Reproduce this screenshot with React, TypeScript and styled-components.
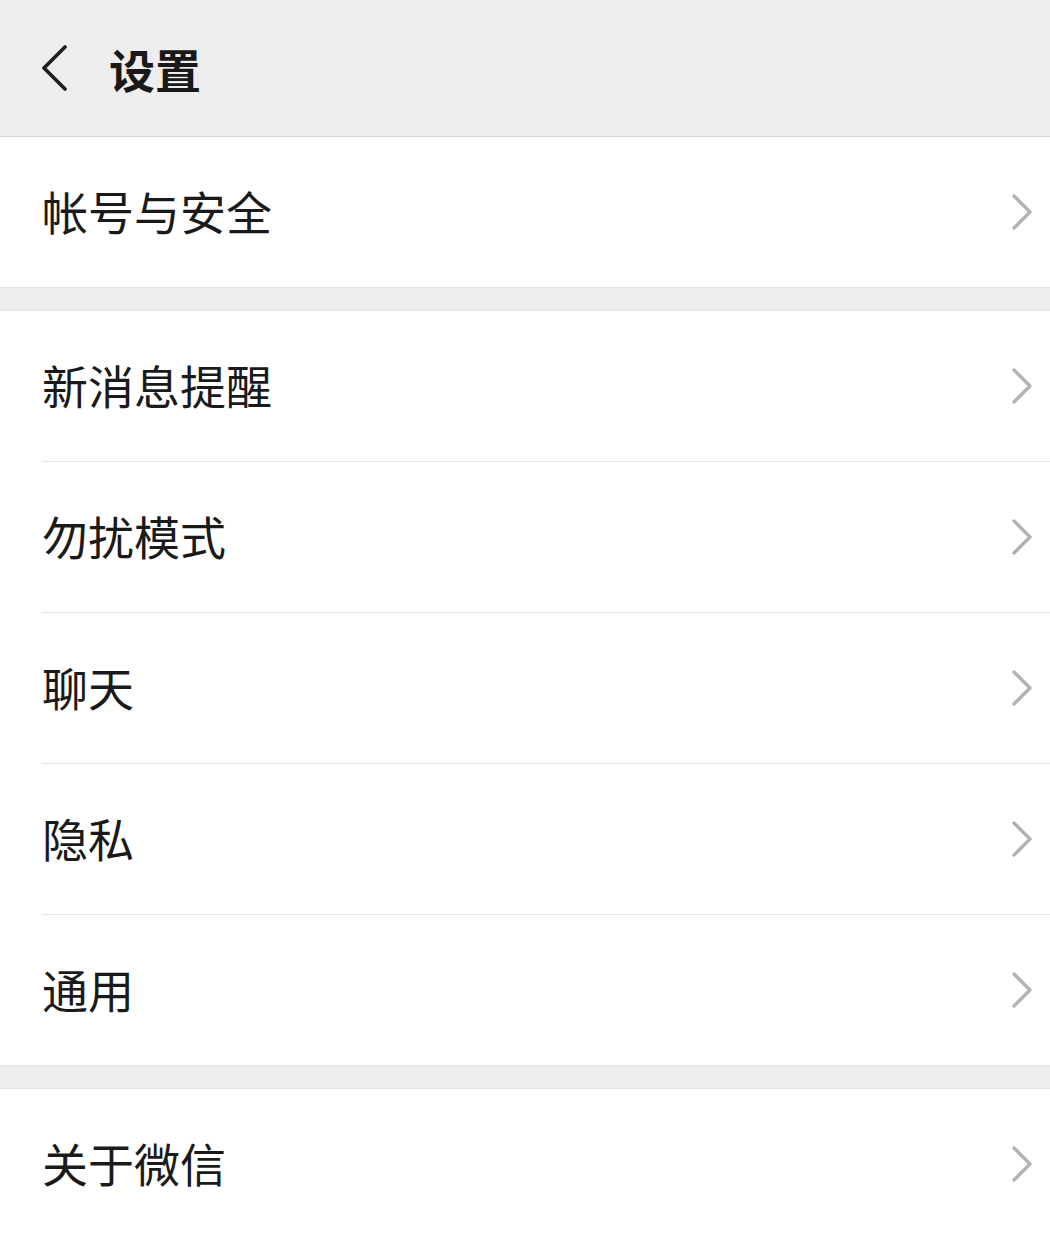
import React from "react";
import styled, { createGlobalStyle } from "styled-components";

const Global = createGlobalStyle`
  html, body { margin: 0; padding: 0; background: #ededed; }
  body { font-family: "Noto Sans CJK SC", "Noto Sans", sans-serif; -webkit-font-smoothing: antialiased; }
`;

const Page = styled.div`
  width: 1050px;
  min-height: 1234px;
  background: #ededed;
`;

const Header = styled.header`
  height: 136px;
  display: flex;
  align-items: center;
  background: #ededed;
  border-bottom: 1px solid #d6d6d6;
  box-sizing: content-box;
`;

const BackButton = styled.button`
  border: 0;
  background: none;
  padding: 0;
  margin-left: 36px;
  width: 36px;
  height: 50px;
  display: flex;
  align-items: center;
  justify-content: center;
`;

const Title = styled.h1`
  margin: 0 0 0 37px;
  font-size: 46px;
  font-weight: 700;
  color: #191919;
  line-height: 1;
`;

const Group = styled.section`
  background: #fff;
  border-bottom: 1px solid #e2e2e2;
`;

const Spacer = styled.div`
  height: 22px;
  background: #ededed;
  border-bottom: 1px solid #e2e2e2;
`;

const RowInner = styled.div<{ $divider?: boolean }>`
  height: 150px;
  margin-left: 42px;
  display: flex;
  align-items: center;
  border-bottom: ${(p) => (p.$divider ? "1px solid #e5e5e5" : "0")};
`;

const Label = styled.span`
  flex: 1;
  font-size: 46px;
  color: #1a1a1a;
  line-height: 1;
  margin-top: -4px;
`;

const Arrow = styled.span`
  width: 24px;
  height: 40px;
  margin-right: 16px;
  display: flex;
  align-items: center;
  justify-content: center;
`;

const BackIcon = () => (
  <svg width="30" height="46" viewBox="0 0 30 46">
    <path d="M26 2 L5 23 L26 44" fill="none" stroke="#1c1c1c" strokeWidth="3.6" strokeLinecap="round" strokeLinejoin="round" />
  </svg>
);

const ChevronIcon = () => (
  <svg width="22" height="38" viewBox="0 0 22 38">
    <path d="M3 3 L19 19 L3 35" fill="none" stroke="#b3b3b3" strokeWidth="3.4" strokeLinecap="round" strokeLinejoin="round" />
  </svg>
);

const Item = ({ label, divider }: { label: string; divider?: boolean }) => (
  <RowInner $divider={divider}>
    <Label>{label}</Label>
    <Arrow>
      <ChevronIcon />
    </Arrow>
  </RowInner>
);

export default function App() {
  const middle = ["新消息提醒", "勿扰模式", "聊天", "隐私", "通用"];
  return (
    <Page>
      <Global />
      <Header>
        <BackButton aria-label="返回">
          <BackIcon />
        </BackButton>
        <Title>设置</Title>
      </Header>
      <Group>
        <Item label="帐号与安全" />
      </Group>
      <Spacer />
      <Group>
        {middle.map((m, i) => (
          <Item key={m} label={m} divider={i < middle.length - 1} />
        ))}
      </Group>
      <Spacer />
      <Group>
        <Item label="关于微信" />
      </Group>
    </Page>
  );
}
